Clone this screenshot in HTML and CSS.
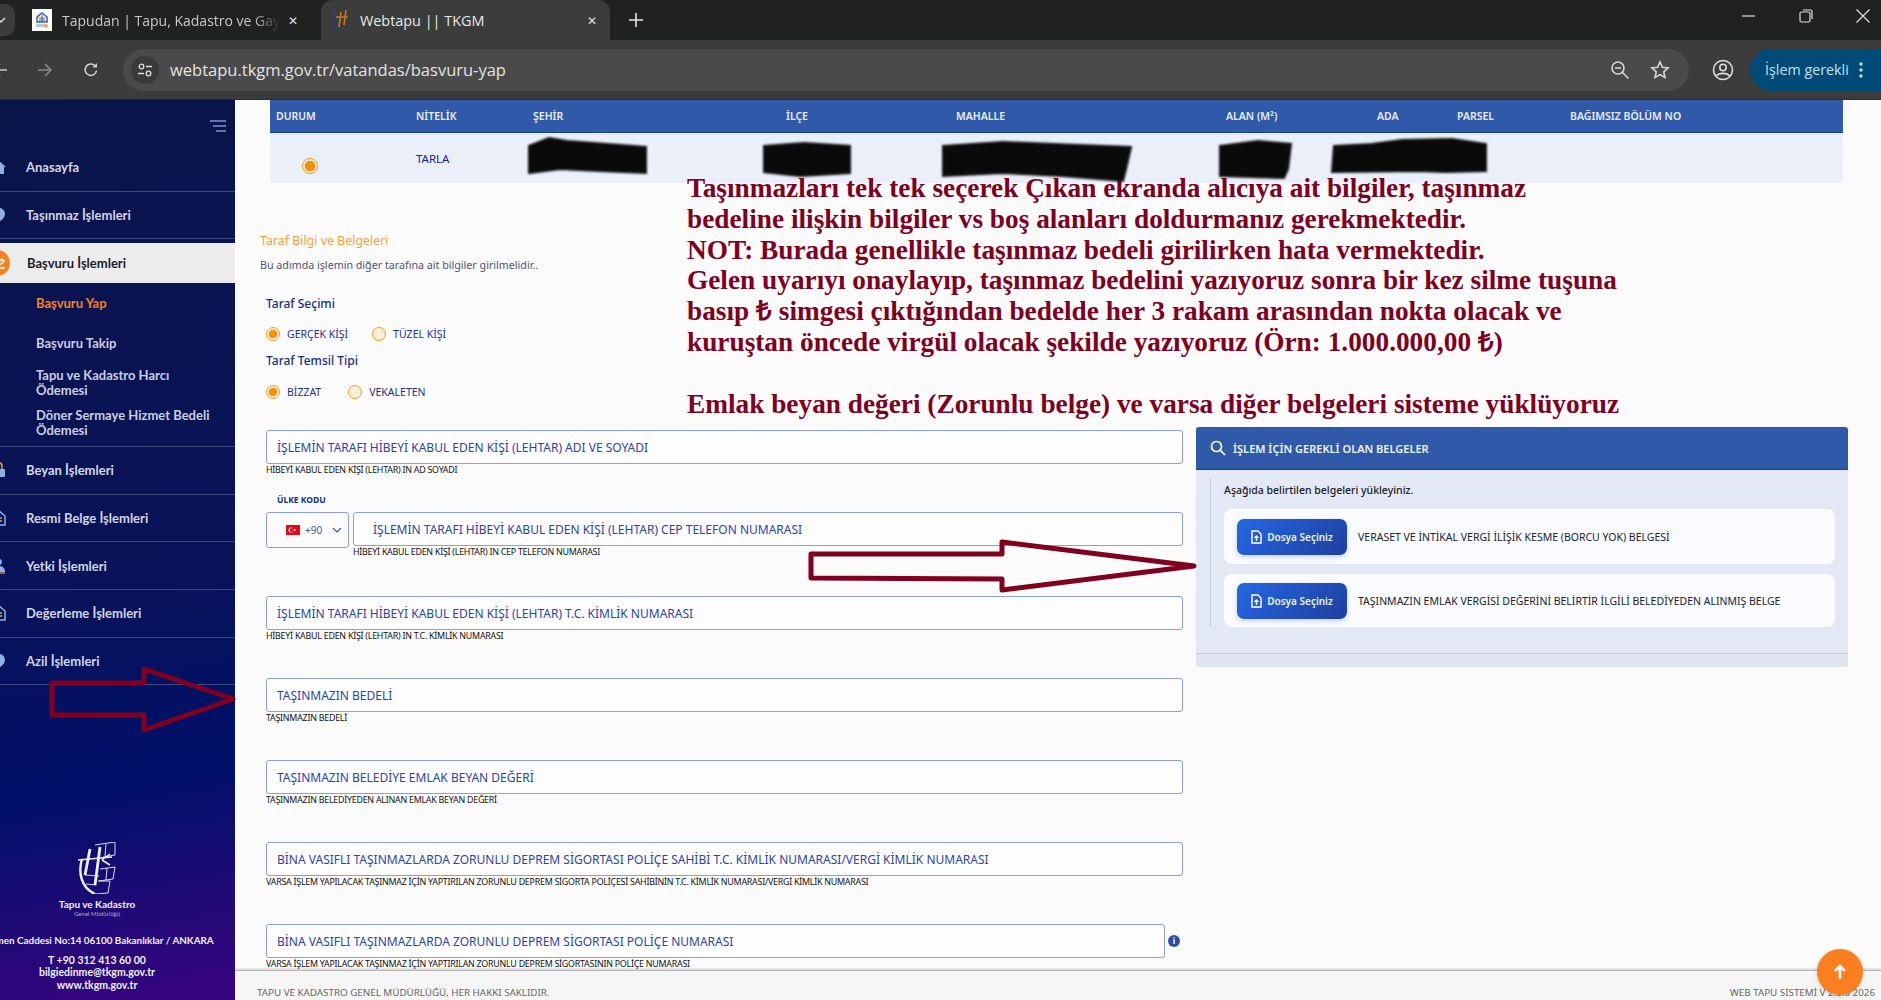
FILE: index.html
```html
<!DOCTYPE html>
<html lang="tr">
<head>
    <meta charset="UTF-8">
    <title>Webtapu || TKGM</title>
    <link rel="stylesheet" href="styles.css">
</head>
<body>
    <!-- tarayici cubugu -->
    <div class="tabstrip">
        <div class="tab-search">
            <svg width="10" height="10" viewBox="0 0 10 10"><path d="M0 3l4 4 4-4" fill="none" stroke="#ddd" stroke-width="1.5"/></svg>
        </div>
        <div class="tab other">
            <svg class="favicon" width="20" height="22" viewBox="0 0 20 22">
                <rect width="20" height="22" fill="#fff"/>
                <path d="M10 4l5 4v5H5V8z" fill="none" stroke="#3a5a9c" stroke-width="1.5"/>
                <path d="M7 9h6M7 11h6M10 6v7" stroke="#3a5a9c"/>
                <rect x="4" y="15" width="9" height="3" fill="#b8c8e0"/>
                <circle cx="14" cy="17" r="2" fill="#e4b23a"/>
            </svg>
            <span class="tab-title">Tapudan | Tapu, Kadastro ve Gay</span>
            <span class="tab-close">✕</span>
        </div>
        <div class="tab active">
            <svg class="favicon" width="16" height="22" viewBox="0 0 16 22">
                <path d="M4 3C-1 10 0 18 6 21" fill="none" stroke="#27407f" stroke-width="1.800"/>
                <path d="M8 3L6 18M13 1l-2 15M3 8h12" fill="none" stroke="#c9781f" stroke-width="1.600"/>
            </svg>
            <span class="tab-title">Webtapu || TKGM</span>
            <span class="tab-close">✕</span>
        </div>
        <div class="tab-new">
            <svg width="14" height="14" viewBox="0 0 14 14"><path d="M7 0v14M0 7h14" stroke="#e4e4e4" stroke-width="1.6"/></svg>
        </div>
        <div class="win-controls">
            <svg width="14" height="14" viewBox="0 0 14 14"><path d="M0 7h13" stroke="#ddd" stroke-width="1.2"/></svg>
            <svg width="14" height="14" viewBox="0 0 14 14"><rect x="1" y="3" width="10" height="10" rx="1.5" fill="none" stroke="#ddd" stroke-width="1.2"/><path d="M4 1h7.5A1.5 1.5 0 0 1 13 2.500V10" fill="none" stroke="#ddd" stroke-width="1.2"/></svg>
            <svg width="14" height="14" viewBox="0 0 14 14"><path d="M0.500 0.500l13 13M13.500 0.500l-13 13" stroke="#ddd" stroke-width="1.2"/></svg>
        </div>
    </div>
    <div class="toolbar">
        <svg class="nav-back" width="16" height="16" viewBox="0 0 16 16"><path d="M15 8H2M8 2L2 8l6 6" fill="none" stroke="#c8c8c8" stroke-width="1.6"/></svg>
        <svg class="nav-fwd" width="16" height="16" viewBox="0 0 16 16"><path d="M1 8h13M8 2l6 6-6 6" fill="none" stroke="#8a8a8a" stroke-width="1.6"/></svg>
        <svg class="nav-reload" width="16" height="16" viewBox="0 0 16 16"><path d="M13.500 8.500A5.700 5.700 0 1 1 12 3.800" fill="none" stroke="#d0d0d0" stroke-width="1.6"/><path d="M14 1v4.500H9.500z" fill="#d0d0d0"/></svg>
        <div class="omnibox">
            <div class="site-info">
                <svg width="16" height="16" viewBox="0 0 16 16" fill="none" stroke="#e0e0e0" stroke-width="1.3"><circle cx="4.500" cy="4.500" r="2.300"/><path d="M9 4.500h6M1 11.500h6"/><circle cx="11.500" cy="11.500" r="2.300"/></svg>
            </div>
            <span class="url">webtapu.tkgm.gov.tr/vatandas/basvuru-yap</span>
            <svg class="omni-icon" width="20" height="20" viewBox="0 0 20 20" fill="none" stroke="#d8d8d8" stroke-width="1.6"><circle cx="8" cy="8" r="6"/><path d="M5 8h6M12.500 12.500l6 6"/></svg>
            <svg class="omni-icon" width="20" height="20" viewBox="0 0 20 20" fill="none" stroke="#d8d8d8" stroke-width="1.6"><path d="M10 2l2.400 5.300 5.700.6-4.300 3.900 1.200 5.700L10 14.600l-5 2.900 1.200-5.700-4.300-3.900 5.700-.6z"/></svg>
        </div>
        <svg class="profile" width="22" height="22" viewBox="0 0 22 22" fill="none" stroke="#dcdcdc" stroke-width="1.6"><circle cx="11" cy="11" r="9.500"/><circle cx="11" cy="8.500" r="3.200"/><path d="M4.500 17c2-3.500 11-3.500 13 0"/></svg>
        <div class="action-pill">
            <span>İşlem gerekli</span>
            <svg width="4" height="16" viewBox="0 0 4 16" fill="#c2e0f2"><circle cx="2" cy="2" r="1.700"/><circle cx="2" cy="8" r="1.700"/><circle cx="2" cy="14" r="1.700"/></svg>
        </div>
    </div>

    <div class="app">
        <aside class="sidebar">
            <div class="side-inner">
                <div class="side-top">
                    <svg width="16" height="12" viewBox="0 0 16 12"><path d="M0 1h16M3 6h13M6 11h10" stroke="#7f93d6" stroke-width="1.600"/></svg>
                </div>
                <div class="menu-item"><span class="menu-icon"><svg width="14" height="14" viewBox="0 0 14 14" fill="#8fb0e6"><path d="M7 1l7 6h-2v7H2V7H0z"/></svg></span>Anasayfa</div>
                <div class="menu-item"><span class="menu-icon"><svg width="14" height="16" viewBox="0 0 14 16" fill="#8fb0e6"><path d="M7 1a6 6 0 0 1 6 6c0 3-3 6-6 8-3-2-6-5-6-8a6 6 0 0 1 6-6z"/></svg></span>Taşınmaz İşlemleri</div>
                <div class="menu-item open"><span class="menu-icon orange"><svg width="14" height="14" viewBox="0 0 14 14" fill="none" stroke="#fff" stroke-width="1.500"><path d="M2 12h10M3 9l6-6 2 2-6 6z"/></svg></span>Başvuru İşlemleri</div>
                <div class="sub-item current">Başvuru Yap</div>
                <div class="sub-item">Başvuru Takip</div>
                <div class="sub-item">Tapu ve Kadastro Harcı<br>Ödemesi</div>
                <div class="sub-item last">Döner Sermaye Hizmet Bedeli<br>Ödemesi</div>
                <div class="menu-item"><span class="menu-icon"><svg width="14" height="16" viewBox="0 0 14 16"><path d="M4 7V4a3 3 0 0 1 6 0v3" fill="none" stroke="#e3a43c" stroke-width="1.500"/><rect x="1" y="7" width="12" height="8" rx="1" fill="#8fb0e6"/></svg></span>Beyan İşlemleri</div>
                <div class="menu-item"><span class="menu-icon"><svg width="14" height="16" viewBox="0 0 14 16"><path d="M1 6l6-5 6 5v9H1z" fill="none" stroke="#8fb0e6" stroke-width="1.500"/><path d="M4 8h6M4 11h6" stroke="#e3a43c" stroke-width="1.500"/></svg></span>Resmi Belge İşlemleri</div>
                <div class="menu-item"><span class="menu-icon"><svg width="14" height="16" viewBox="0 0 14 16"><circle cx="7" cy="4" r="3" fill="#8fb0e6"/><path d="M1 14c0-4 3-6 6-6s6 2 6 6z" fill="#8fb0e6"/><path d="M1 15h12" stroke="#e3a43c" stroke-width="1.200"/></svg></span>Yetki İşlemleri</div>
                <div class="menu-item"><span class="menu-icon"><svg width="14" height="16" viewBox="0 0 14 16"><path d="M1 6l6-5 6 5v9H1z" fill="none" stroke="#8fb0e6" stroke-width="1.500"/><path d="M4 8h6M4 11h6" stroke="#e3a43c" stroke-width="1.500"/></svg></span>Değerleme İşlemleri</div>
                <div class="menu-item"><span class="menu-icon"><svg width="14" height="16" viewBox="0 0 14 16" fill="#8fb0e6"><path d="M7 1a6 6 0 0 1 6 6c0 3-3 6-6 8-3-2-6-5-6-8a6 6 0 0 1 6-6z"/></svg></span>Azil İşlemleri</div>

                <div class="side-bottom">
                    <svg class="side-logo" width="40" height="52" viewBox="0 0 40 52" fill="none" stroke="#eef0fa">
                        <path d="M5 17C1 30 4 46 18 52" stroke-width="2.400"/>
                        <path d="M13 7L8 33M23 5l-5 38" stroke-width="2.800"/>
                        <path d="M1 18l34-3M25 18l8 5M25 18l8-6" stroke-width="1.500"/>
                        <path d="M18 3l20-3v13l-12 2M29 2l-1 12M23 27l15-2-2 12-14 2M30 26l-1 12M21 39l12 0-2 12-13 1M8 33l14 1M9 42l10 1" stroke-width="0.900"/>
                    </svg>
                    <div class="logo-name">Tapu ve Kadastro</div>
                    <div class="logo-sub">Genel Müdürlüğü</div>
                    <div class="side-addr">Dikmen Caddesi No:14 06100 Bakanlıklar / ANKARA</div>
                    <div class="side-contact">T +90 312 413 60 00<br>bilgiedinme@tkgm.gov.tr<br>www.tkgm.gov.tr</div>
                </div>
            </div>
        </aside>

        <main class="main">
            <div class="content">
                <div class="tasinmaz-table">
                    <div class="table-head">
                        <span>DURUM</span><span>NİTELİK</span><span>ŞEHİR</span><span>İLÇE</span><span>MAHALLE</span><span>ALAN (M²)</span><span>ADA</span><span>PARSEL</span><span>BAĞIMSIZ BÖLÜM NO</span>
                    </div>
                    <div class="table-row">
                        <span class="cell-radio"><i class="radio on big"></i></span><span>TARLA</span>
                    </div>
                </div>

                <div class="form-wrap">
                    <div class="left-col">
                        <div class="step-title">Taraf Bilgi ve Belgeleri</div>
                        <div class="step-sub">Bu adımda işlemin diğer tarafına ait bilgiler girilmelidir..</div>

                        <div class="group-title first">Taraf Seçimi</div>
                        <div class="radio-row">
                            <label class="radio-opt"><i class="radio on"></i>GERÇEK KİŞİ</label>
                            <label class="radio-opt"><i class="radio"></i>TÜZEL KİŞİ</label>
                        </div>
                        <div class="group-title">Taraf Temsil Tipi</div>
                        <div class="radio-row">
                            <label class="radio-opt bizzat"><i class="radio on"></i>BİZZAT</label>
                            <label class="radio-opt"><i class="radio"></i>VEKALETEN</label>
                        </div>

                        <div class="field top-field">
                            <div class="field-box">İŞLEMİN TARAFI HİBEYİ KABUL EDEN KİŞİ (LEHTAR) ADI VE SOYADI</div>
                            <div class="field-hint">HİBEYİ KABUL EDEN KİŞİ (LEHTAR) IN AD SOYADI</div>
                        </div>

                        <div class="country-label">ÜLKE KODU</div>
                        <div class="phone-row">
                            <div class="country-select">
                                <svg width="14" height="10" viewBox="0 0 14 10"><rect width="14" height="10" fill="#e30a17"/><circle cx="5" cy="5" r="2.500" fill="#fff"/><circle cx="5.700" cy="5" r="2" fill="#e30a17"/><circle cx="8.700" cy="5" r="0.900" fill="#fff"/></svg>
                                <span>+90</span>
                                <svg width="10" height="6" viewBox="0 0 10 6"><path d="M1 1l4 4 4-4" fill="none" stroke="#44598f" stroke-width="1.200"/></svg>
                            </div>
                            <div class="field phone-field">
                                <div class="field-box indent">İŞLEMİN TARAFI HİBEYİ KABUL EDEN KİŞİ (LEHTAR) CEP TELEFON NUMARASI</div>
                                <div class="field-hint">HİBEYİ KABUL EDEN KİŞİ (LEHTAR) IN CEP TELEFON NUMARASI</div>
                            </div>
                        </div>

                        <div class="field">
                            <div class="field-box">İŞLEMİN TARAFI HİBEYİ KABUL EDEN KİŞİ (LEHTAR) T.C. KİMLİK NUMARASI</div>
                            <div class="field-hint">HİBEYİ KABUL EDEN KİŞİ (LEHTAR) IN T.C. KİMLİK NUMARASI</div>
                        </div>
                        <div class="field">
                            <div class="field-box">TAŞINMAZIN BEDELİ</div>
                            <div class="field-hint">TAŞINMAZIN BEDELİ</div>
                        </div>
                        <div class="field">
                            <div class="field-box">TAŞINMAZIN BELEDİYE EMLAK BEYAN DEĞERİ</div>
                            <div class="field-hint">TAŞINMAZIN BELEDİYEDEN ALINAN EMLAK BEYAN DEĞERİ</div>
                        </div>
                        <div class="field">
                            <div class="field-box">BİNA VASIFLI TAŞINMAZLARDA ZORUNLU DEPREM SİGORTASI POLİÇE SAHİBİ T.C. KİMLİK NUMARASI/VERGİ KİMLİK NUMARASI</div>
                            <div class="field-hint">VARSA İŞLEM YAPILACAK TAŞINMAZ İÇİN YAPTIRILAN ZORUNLU DEPREM SİGORTA POLİÇESİ SAHİBİNİN T.C. KİMLİK NUMARASI/VERGİ KİMLİK NUMARASI</div>
                        </div>
                        <div class="field last-field">
                            <div class="info-row">
                                <div class="field-box">BİNA VASIFLI TAŞINMAZLARDA ZORUNLU DEPREM SİGORTASI POLİÇE NUMARASI</div>
                                <i class="info-dot">i</i>
                            </div>
                            <div class="field-hint">VARSA İŞLEM YAPILACAK TAŞINMAZ İÇİN YAPTIRILAN ZORUNLU DEPREM SİGORTASININ POLİÇE NUMARASI</div>
                        </div>
                    </div>

                    <section class="docs-panel">
                        <div class="docs-head">
                            <svg width="16" height="16" viewBox="0 0 16 16" fill="none" stroke="#fff" stroke-width="1.700"><circle cx="6.500" cy="6.500" r="5"/><path d="M10.500 10.500l4.500 4.500"/></svg>
                            İŞLEM İÇİN GEREKLİ OLAN BELGELER
                        </div>
                        <div class="docs-body">
                            <div class="docs-inner">
                                <div class="docs-note">Aşağıda belirtilen belgeleri yükleyiniz.</div>
                                <div class="doc-card tall">
                                    <button class="file-btn"><svg width="11" height="14" viewBox="0 0 11 14"><path d="M1 1h6l3 3v9H1z" fill="none" stroke="#fff" stroke-width="1.400"/><path d="M5.500 11V6M3.500 8l2-2 2 2" fill="none" stroke="#fff" stroke-width="1.400"/></svg>Dosya Seçiniz</button>
                                    VERASET VE İNTİKAL VERGİ İLİŞİK KESME (BORCU YOK) BELGESİ
                                </div>
                                <div class="doc-card">
                                    <button class="file-btn"><svg width="11" height="14" viewBox="0 0 11 14"><path d="M1 1h6l3 3v9H1z" fill="none" stroke="#fff" stroke-width="1.400"/><path d="M5.500 11V6M3.500 8l2-2 2 2" fill="none" stroke="#fff" stroke-width="1.400"/></svg>Dosya Seçiniz</button>
                                    TAŞINMAZIN EMLAK VERGİSİ DEĞERİNİ BELİRTİR İLGİLİ BELEDİYEDEN ALINMIŞ BELGE
                                </div>
                            </div>
                        </div>
                        <div class="docs-foot"></div>
                    </section>
                </div>
            </div>

            <footer class="footer">
                <span>TAPU VE KADASTRO GENEL MÜDÜRLÜĞÜ, HER HAKKI SAKLIDIR.</span>
                <span>WEB TAPU SİSTEMİ V 2.0.0 2026</span>
            </footer>

            <!-- ustune yazilan notlar -->
            <div class="note">Taşınmazları tek tek seçerek Çıkan ekranda alıcıya ait bilgiler, taşınmaz<br>bedeline ilişkin bilgiler vs boş alanları doldurmanız gerekmektedir.<br>NOT: Burada genellikle taşınmaz bedeli girilirken hata vermektedir.<br>Gelen uyarıyı onaylayıp, taşınmaz bedelini yazıyoruz sonra bir kez silme tuşuna<br>basıp ₺ simgesi çıktığından bedelde her 3 rakam arasından nokta olacak ve<br>kuruştan öncede virgül olacak şekilde yazıyoruz (Örn: 1.000.000,00 ₺)<br><br>Emlak beyan değeri (Zorunlu belge) ve varsa diğer belgeleri sisteme yüklüyoruz</div>

            <button class="to-top"><svg width="14" height="16" viewBox="0 0 14 16"><path d="M7 15V3M2 7l5-5 5 5" fill="none" stroke="#fff" stroke-width="2.600"/></svg></button>
        </main>
    </div>

    <!-- karalamalar ve oklar ekran goruntusunun uzerinde -->
    <svg class="overlay" width="1881" height="1000" viewBox="0 0 1881 1000">
        <g class="scribble">
            <path d="M529 146l20-8 18 3 79 6v26l-46-2-40-2-31 4z"/>
            <path d="M764 146l40-3 46 3v27l-50 3-36-4z"/>
            <path d="M943 146l60-4 50 2 78 3-5 22-3 12-60-5-60-3-60 3z"/>
            <path d="M1220 146l38-5 33 3-3 25-4 9-64-2z"/>
            <path d="M1334 146l38-2 30-4 50-1 34 5v27l-40 1-30-1-84 1z"/>
        </g>
        <g fill="none" stroke="#800020" stroke-width="5" stroke-linejoin="round">
            <path d="M52 683h92v-14l89 30-89 31v-15H52z"/>
            <path d="M811 554h191v-12l192 24-192 24v-11l-191-1z"/>
        </g>
    </svg>
</body>
</html>
```

FILE: styles.css
```css
* {
    box-sizing: border-box;
}

html, body {
    height: 100%;
}

body {
    margin: 0;
    display: flex;
    flex-direction: column;
    height: 1000px;
    overflow: hidden;
    position: relative;
    font-family: "Noto Sans", Arial, sans-serif;
    background: #fbfbfc;
}

/* tarayici */
.tabstrip {
    height: 40px;
    background: #202221;
    display: flex;
    align-items: flex-end;
    flex: none;
}

.tab-search {
    width: 15px;
    height: 32px;
    margin-bottom: 4px;
    background: #3c3c3c;
    border-radius: 0 10px 10px 0;
    display: flex;
    align-items: center;
}

.tab-search svg {
    margin-left: -3px;
}

.tab {
    height: 40px;
    width: 289px;
    flex: none;
    display: flex;
    align-items: center;
    padding: 0 13px 0 17px;
    color: #c8c8c8;
    font-size: 14px;
    font-family: "Open Sans", sans-serif;
}

.tab.other {
    width: 306px;
    padding-right: 23px;
}

.tab.other .tab-title {
    mask-image: linear-gradient(to right, #000 88%, transparent);
}

.tab.active {
    background: #3c3c3c;
    border-radius: 12px 12px 0 0;
    color: #e8e8e8;
    font-size: 14.400px;
    padding-left: 12px;
}

.tab .favicon {
    margin-right: 10px;
    flex: none;
}

.tab.active .favicon {
    margin-right: 11px;
}

.tab-title {
    flex: 1;
    overflow: hidden;
    white-space: nowrap;
}

.tab-close {
    font-size: 12px;
    color: #e0e0e0;
    margin-left: 8px;
}

.tab-new {
    height: 40px;
    margin-left: 19px;
    display: flex;
    align-items: center;
}

.win-controls {
    margin-left: auto;
    height: 40px;
    display: flex;
    gap: 43px;
    padding: 9px 11px 0 0;
}

.toolbar {
    height: 60px;
    flex: none;
    background: #3c3c3c;
    display: flex;
    align-items: center;
    position: relative;
    border-bottom: 1px solid #2c2c2c;
}

.nav-back {
    margin-left: -8px;
    flex: none;
}

.nav-fwd {
    margin-left: 29px;
    flex: none;
}

.nav-reload {
    margin-left: 30px;
    flex: none;
}

.omnibox {
    margin-left: 24px;
    width: 1566px;
    height: 42px;
    flex: none;
    background: #4a4a4a;
    border-radius: 21px;
    display: flex;
    align-items: center;
    padding: 0 19px 0 8px;
}

.site-info {
    width: 28px;
    height: 28px;
    border-radius: 50%;
    background: #3a3a3a;
    display: flex;
    align-items: center;
    justify-content: center;
}

.url {
    margin-left: 11px;
    flex: 1;
    font-family: "Open Sans", sans-serif;
    font-size: 16.500px;
    color: #e4e4e4;
}

.omni-icon + .omni-icon {
    margin-left: 20px;
}

.profile {
    margin-left: 23px;
    flex: none;
}

.action-pill {
    margin-left: 16px;
    height: 42px;
    width: 131px;
    flex: none;
    background: #004a77;
    border-radius: 21px 0 0 21px;
    color: #c2e0f2;
    font-family: "Open Sans", sans-serif;
    font-size: 14.300px;
    display: flex;
    align-items: center;
    padding-left: 15px;
    gap: 10px;
}

/* ana duzen */
.app {
    flex: 1;
    display: flex;
    min-height: 0;
}

.sidebar {
    width: 235px;
    flex: none;
    overflow: hidden;
    background: linear-gradient(170deg, #0a1449 0%, #08135a 55%, #00106a 75%, #3a0480 100%);
}

.side-inner {
    margin-left: -41px;
    width: 276px;
    height: 100%;
    display: flex;
    flex-direction: column;
    font-family: Lato, sans-serif;
    color: #d2d6e6;
    font-size: 13px;
    font-weight: 700;
}

.side-top {
    height: 44px;
    display: flex;
    justify-content: flex-end;
    padding: 20px 9px 0 0;
}

.menu-item {
    height: 47.600px;
    flex: none;
    display: flex;
    align-items: center;
    border-bottom: 1px solid #3c4680;
}

.menu-icon {
    width: 67px;
    display: flex;
    justify-content: flex-end;
    padding-right: 20px;
}

.menu-item.open {
    height: 40px;
    margin-top: 4px;
    background: #ececec;
    color: #1b1b2a;
    border: 0;
}

.menu-icon.orange {
    padding: 0 3px 0 0;
    width: 26px;
    height: 26px;
    margin: 0 17px 0 25px;
    background: #f5821f;
    border-radius: 50%;
    align-items: center;
}

.sub-item {
    height: 40px;
    flex: none;
    display: flex;
    align-items: center;
    padding-left: 77px;
    line-height: 15px;
    color: #c9cde0;
}

.sub-item.current {
    color: #f5821f;
}

.sub-item.last {
    height: 44px;
    padding-bottom: 4px;
    border-bottom: 1px solid #3c4680;
}

.side-bottom {
    margin-top: auto;
    padding-bottom: 9px;
    text-align: center;
    color: #eef0fa;
}

.side-logo {
    display: block;
    margin: 0 auto 4px;
}

.logo-name {
    font-size: 10px;
    line-height: 12px;
}

.logo-sub {
    font-size: 6px;
    font-weight: 400;
    line-height: 7px;
    color: #aab;
}

.side-addr {
    font-size: 9.900px;
    margin-top: 16px;
    line-height: 14px;
    white-space: nowrap;
}

.side-contact {
    font-size: 10.500px;
    margin-top: 7px;
    line-height: 12.500px;
}

.main {
    flex: 1;
    position: relative;
    display: flex;
    flex-direction: column;
    min-width: 0;
}

.content {
    flex: 1;
    min-height: 0;
    overflow: hidden;
    padding-left: 35px;
}

/* tablo */
.tasinmaz-table {
    width: 1573px;
}

.table-head, .table-row {
    display: grid;
    grid-template-columns: 140px 117px 253px 170px 270px 151px 80px 113px 1fr;
    padding-left: 6px;
    align-items: center;
    font-size: 10.500px;
}

.table-head {
    height: 33px;
    background: #3159a9;
    border-bottom: 1px solid #0f44a0;
    color: #e6eefc;
    font-weight: 600;
}

.table-row {
    height: 50px;
    background: #eaeffa;
    color: #14249a;
    font-size: 11.500px;
    border-radius: 0 0 3px 3px;
}

.cell-radio {
    padding: 19px 0 0 26px;
}

/* radyo */
.radio {
    display: inline-block;
    width: 14px;
    height: 14px;
    border-radius: 50%;
    border: 1.500px solid #fb9a14;
    background: #ffeed8;
    flex: none;
}

.radio.on {
    background: radial-gradient(circle, #fb8f0c 0 4px, #ffeed8 4.500px);
}

.radio.big {
    width: 16px;
    height: 16px;
    background: radial-gradient(circle, #fb8f0c 0 5px, #ffeed8 5.500px);
}

/* form */
.form-wrap {
    display: flex;
    align-items: flex-start;
    margin-left: -4px;
}

.left-col {
    width: 917px;
    flex: none;
}

.step-title {
    margin: 50px 0 0 -6px;
    font-size: 12.400px;
    line-height: 16px;
    color: #f9a136;
}

.step-sub {
    margin: 8px 0 0 -6px;
    font-size: 10.700px;
    line-height: 16px;
    color: #4d5570;
}

.group-title {
    margin-top: 11px;
    font-size: 12px;
    font-weight: 500;
    line-height: 16px;
    color: #123089;
}

.group-title.first {
    margin-top: 23px;
}

.radio-row {
    display: flex;
    height: 16px;
    margin-top: 15px;
}

.group-title.first + .radio-row {
    margin-top: 14px;
}

.radio-opt {
    display: flex;
    align-items: center;
    gap: 7px;
    font-size: 10.500px;
    color: #1d2f92;
    margin-right: 24px;
}

.radio-opt.bizzat {
    margin-right: 27px;
}

.field {
    margin-bottom: 36px;
}

.top-field {
    margin-top: 30px;
    margin-bottom: 18px;
}

.last-field {
    margin-bottom: 0;
}

.field-box {
    flex: 1;
    height: 34px;
    border: 1px solid #8c9ed6;
    border-radius: 3px;
    padding: 0 10px;
    display: flex;
    align-items: center;
    font-size: 12px;
    color: #2a45a8;
    white-space: nowrap;
    background: #fdfdfe;
}

.field-box.indent {
    padding-left: 19px;
}

.field-hint {
    font-size: 8.900px;
    line-height: 10px;
    margin-top: 1px;
    height: 11px;
    color: #111;
    white-space: nowrap;
    letter-spacing: -0.250px;
}

.country-label {
    font-size: 8.500px;
    font-weight: 700;
    line-height: 12px;
    color: #123089;
    padding-left: 11px;
    margin-bottom: 6px;
}

.phone-row {
    display: flex;
    align-items: flex-start;
    gap: 4px;
    margin-bottom: 38px;
}

.phone-field {
    flex: 1;
    margin: 0;
}

.country-select {
    width: 83px;
    height: 36px;
    flex: none;
    border: 1px solid #8c9ed6;
    border-radius: 3px;
    display: flex;
    align-items: center;
    padding-left: 19px;
    font-size: 10px;
    color: #47598f;
    gap: 5px;
}

.country-select span {
    margin-right: 5px;
}

.info-row {
    display: flex;
    align-items: center;
    gap: 3px;
}

.info-dot {
    width: 12px;
    height: 12px;
    margin-right: 3px;
    border-radius: 50%;
    background: #2d4ea8;
    color: #fff;
    font-size: 8px;
    font-style: normal;
    font-weight: 700;
    text-align: center;
    line-height: 12px;
    flex: none;
}

/* belgeler */
.docs-panel {
    width: 652px;
    margin: 244px 0 0 13px;
    flex: none;
    border-radius: 3px;
    overflow: hidden;
    background: #e3e9f4;
}

.docs-head {
    height: 43px;
    background: #3159a9;
    border-bottom: 1px solid #0f44a0;
    display: flex;
    align-items: center;
    gap: 7px;
    padding-left: 14px;
    color: #eef3fd;
    font-size: 11px;
    font-weight: 600;
}

.docs-body {
    height: 183px;
    padding: 8px 13px 0 14px;
}

.docs-inner {
    border-left: 1px solid #c3cde0;
    padding-left: 13px;
    height: 149px;
}

.docs-note {
    font-size: 10.500px;
    font-weight: 500;
    line-height: 24px;
    color: #1a1a2a;
    margin-bottom: 7px;
}

.doc-card {
    height: 53px;
    margin-bottom: 10px;
    background: #f9fbfe;
    border-radius: 8px;
    display: flex;
    align-items: center;
    padding-left: 13px;
    font-size: 10.500px;
    color: #20222e;
}

.doc-card.tall {
    height: 55px;
}

.file-btn {
    width: 110px;
    height: 36px;
    margin-right: 11px;
    border: 0;
    border-radius: 7px;
    background: linear-gradient(135deg, #2667e4, #1e3f9f);
    box-shadow: 0 2px 5px rgba(40, 80, 180, 0.25);
    color: #eef3fd;
    font-family: inherit;
    font-size: 10px;
    font-weight: 600;
    display: flex;
    align-items: center;
    justify-content: center;
    gap: 5px;
}

.docs-foot {
    height: 14px;
    background: #dfe4ed;
    border-top: 1px solid #c5c9d2;
}

/* alt bilgi */
.footer {
    height: 30px;
    flex: none;
    background: #f6f6f6;
    border-top: 1px solid #b8b8b8;
    box-shadow: 0 -1px 2px rgba(0, 0, 0, 0.2);
    display: flex;
    justify-content: space-between;
    align-items: center;
    padding: 14px 6px 0 22px;
    font-size: 9.800px;
    color: #666;
    position: relative;
}

.to-top {
    position: absolute;
    right: 18px;
    top: 849px;
    width: 46px;
    height: 46px;
    border: 0;
    border-radius: 50%;
    background: #fb7f1e;
    box-shadow: 0 1px 4px rgba(0, 0, 0, 0.2);
    display: flex;
    align-items: center;
    justify-content: center;
}

/* notlar */
.note {
    position: absolute;
    left: 452px;
    top: 73px;
    font-family: "Liberation Serif", "Times New Roman", serif;
    font-weight: 700;
    font-size: 27.300px;
    line-height: 30.800px;
    color: #800020;
    white-space: nowrap;
}

.overlay {
    position: absolute;
    left: 0;
    top: 0;
    pointer-events: none;
}

.scribble path {
    fill: #0a0a0a;
    stroke: #111;
    stroke-width: 2;
    filter: blur(1.200px);
}
```
